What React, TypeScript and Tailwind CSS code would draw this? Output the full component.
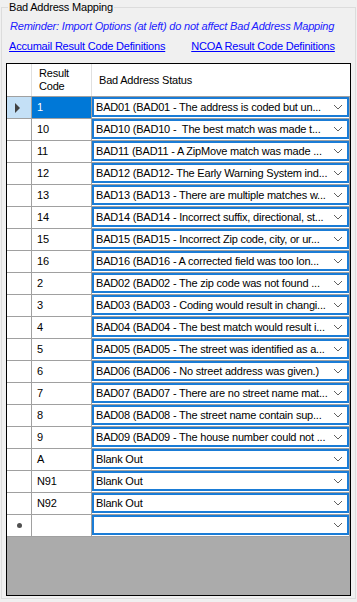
// Bad Address Mapping panel (WinForms-style group box with a DataGridView)

type Row = { code: string; status: string };

const rows: Row[] = [
  { code: '1', status: 'BAD01 (BAD01 - The address is coded but un...' },
  { code: '10', status: 'BAD10 (BAD10 -  The best match was made t...' },
  { code: '11', status: 'BAD11 (BAD11 - A ZipMove match was made ...' },
  { code: '12', status: 'BAD12 (BAD12- The Early Warning System ind...' },
  { code: '13', status: 'BAD13 (BAD13 - There are multiple matches w...' },
  { code: '14', status: 'BAD14 (BAD14 - Incorrect suffix, directional, st...' },
  { code: '15', status: 'BAD15 (BAD15 - Incorrect Zip code, city, or ur...' },
  { code: '16', status: 'BAD16 (BAD16 - A corrected field was too lon...' },
  { code: '2', status: 'BAD02 (BAD02 - The zip code was not found ...' },
  { code: '3', status: 'BAD03 (BAD03 - Coding would result in changi...' },
  { code: '4', status: 'BAD04 (BAD04 - The best match would result i...' },
  { code: '5', status: 'BAD05 (BAD05 - The street was identified as a...' },
  { code: '6', status: 'BAD06 (BAD06 - No street address was given.)' },
  { code: '7', status: 'BAD07 (BAD07 - There are no street name mat...' },
  { code: '8', status: 'BAD08 (BAD08 - The street name contain sup...' },
  { code: '9', status: 'BAD09 (BAD09 - The house number could not ...' },
  { code: 'A', status: 'Blank Out' },
  { code: 'N91', status: 'Blank Out' },
  { code: 'N92', status: 'Blank Out' },
  { code: '', status: '' },
];

const Chevron = () => (
  <svg width="10" height="6" viewBox="0 0 10 6" className="shrink-0">
    <path d="M1 1 L5 5 L9 1" fill="none" stroke="#606060" strokeWidth="1" />
  </svg>
);

const GridRow = ({ row, index }: { row: Row; index: number }) => {
  const selected = index === 0;
  const isNew = index === rows.length - 1;
  return (
    <div className="flex h-[22px] border-b border-[#a0a0a0]">
      <div
        className={`w-[25px] shrink-0 border-r border-[#a0a0a0] flex items-center ${
          selected ? 'bg-[#c4e0f6]' : 'bg-white'
        }`}
      >
        {selected && (
          <svg width="6" height="10" viewBox="0 0 6 10" className="ml-[8px]">
            <path d="M0 0 L5 5 L0 10 Z" fill="#404040" />
          </svg>
        )}
        {isNew && <span className="ml-[10px] w-[5px] h-[5px] rounded-full bg-[#505050]" />}
      </div>
      <div
        className={`w-[60px] shrink-0 border-r border-[#a0a0a0] pl-[5px] flex items-center ${
          selected ? 'bg-[#0078d7] text-white' : 'bg-white text-black'
        }`}
      >
        {row.code}
      </div>
      <div className="flex-1 bg-white border-r border-[#a0a0a0] min-w-0">
        <div className="h-[20px] border-2 border-[#1a7cd6] flex items-center pl-[2px] pr-[4px]">
          <span className="flex-1 truncate whitespace-pre">{row.status}</span>
          <Chevron />
        </div>
      </div>
    </div>
  );
};

export default function App() {
  return (
    <div
      className="w-[357px] h-[602px] bg-[#f0f0f0] pl-[1px] text-[11px] tracking-[-0.2px] text-black overflow-hidden"
      style={{ fontFamily: '"Liberation Sans", Arial, sans-serif' }}
    >
      <fieldset className="w-[355px] h-[599px] border border-[#dcdcdc] flex flex-col">
        <legend className="ml-[6px] px-[1px] leading-[14px]">Bad Address Mapping</legend>
        <div className="pl-[8px] mt-[5px] leading-[14px] italic text-[#2020ff]">
          Reminder: Import Options (at left) do not affect Bad Address Mapping
        </div>
        <div className="flex pl-[7px] mt-[6px] leading-[14px] text-[#0000ff] underline">
          <span>Accumail Result Code Definitions</span>
          <span className="ml-[26px]">NCOA Result Code Definitions</span>
        </div>
        <div className="ml-[4px] mt-[10px] w-[345px] flex-1 mb-[2px] border border-black bg-[#ababab] flex flex-col">
          <div className="flex h-[33px] bg-white border-b border-[#a0a0a0]">
            <div className="w-[25px] shrink-0 border-r border-[#e0e0e0]" />
            <div className="w-[60px] shrink-0 border-r border-[#e0e0e0] pl-[7px] flex items-center leading-[13px]">
              Result
              <br />
              Code
            </div>
            <div className="flex-1 pl-[7px] flex items-center">Bad Address Status</div>
          </div>
          {rows.map((r, i) => (
            <GridRow key={i} row={r} index={i} />
          ))}
        </div>
      </fieldset>
    </div>
  );
}
